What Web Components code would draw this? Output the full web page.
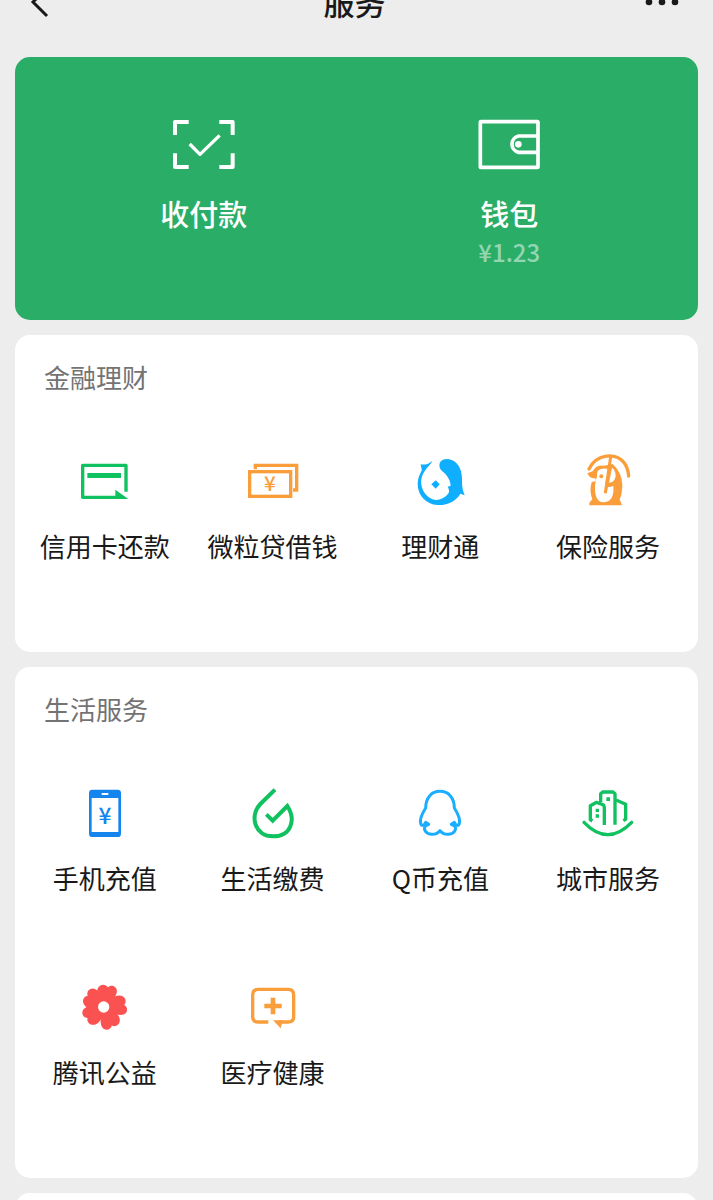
<!DOCTYPE html>
<html lang="zh-CN">
<head>
<meta charset="utf-8">
<meta name="viewport" content="width=device-width, initial-scale=1">
<title>服务</title>
<style>
  body {
    margin: 0;
    background: #ededed;
    color: #191919;
    font-family: "Noto Sans CJK SC", "Noto Sans", sans-serif;
  }
</style>
</head>
<body>
<services-page></services-page>

<script>
// name -> viewBox and markup
const ICONS = {
  scan: ['65 54 192 156', `
    <g fill="none" stroke="#fff" stroke-width="12" stroke-linejoin="round">
      <path d="M74 105V66H115M207 66H247V105M247 160V201H207M115 201H74V160"/>
      <path d="M118 132L149 163L208 106" stroke-width="10"/>
    </g>`],
  wallet: ['52 54 192 156', `
    <g fill="none" stroke="#fff" stroke-width="11" stroke-linejoin="round">
      <rect x="62" y="65" width="173" height="137" rx="2"/>
      <path d="M235 108H177a25 25 0 0 0 0 49H235"/>
    </g>
    <circle cx="176" cy="133" r="10" fill="#fff"/>`],
  card: ['57 48 156 156', `
    <path d="M198 155V76H68V172H172" fill="none" stroke="#10c160" stroke-width="10" stroke-linejoin="round"/>
    <path d="M82 99H183V114H82ZM166 149L205 177H166Z" fill="#10c160"/>`],
  loan: ['560 48 156 156', `
    <g fill="none" stroke="#fa9d3b" stroke-width="10">
      <rect x="568" y="95" width="123" height="74"/>
      <path d="M585 88V76H709V150H698"/>
    </g>
    <text x="629" y="153" font-size="62" font-weight="500" text-anchor="middle" fill="#fa9d3b">¥</text>`],
  wealth: ['43 48 156 156', `
    <path fill="#10aeff" d="M98 62C95 72 79 84 70 102C57 128 68 160 91 174C112 188 139 174 148 157C149 151 147 145 144 140L153 137C152 118 139 101 127 93C119 86 117 74 122 66C127 57 143 55 156 60C179 69 188 94 187 124C187 141 189 151 195 166L182 161C171 182 143 197 113 195C79 193 54 166 54 131C54 114 61 101 66 92C67 84 63 79 63 73C76 76 88 71 98 62Z"/>
    <path fill="#10aeff" d="M108 121L120 133L108 146L95 133Z"/>`],
  insurance: ['36 48 156 156', `
    <path d="M57 87C80 41 137 36 163 69Q174 84 176 108" fill="none" stroke="#fa9d3b" stroke-width="10" stroke-linecap="round"/>
    <path fill="#fa9d3b" d="M52 100L69 93Q79 74 102 77L128 72Q156 98 157 135Q156 165 149 178L156 196H58V188L67 178Q57 152 65 127L72 124V116Q58 115 52 100Z"/>
    <path fill="#fff" d="M81 101Q82 87 97 86Q109 84 115 89L107 124L103 158H110L113 141Q122 142 130 138Q134 184 102 187C78 188 71 158 77 122Q83 112 81 101Z"/>
    <path fill="#fff" d="M126 83Q137 91 137 108Q134 128 117 128Z"/>
    <path fill="#fff" d="M56 115H77V124H56Z"/>
    <path d="M122 50L106 160" fill="none" stroke="#fa9d3b" stroke-width="9"/>
    <circle cx="94" cy="109" r="6" fill="#fa9d3b"/>`],
  phone: ['57 39 156 156', `
    <path fill="#1485ee" fill-rule="evenodd" d="M97 44H173Q183 44 183 54V176Q183 186 173 186H97Q87 186 87 176V54Q87 44 97 44ZM95 69V171H175V69ZM125 54V60H145V54Z"/>
    <text x="135" y="147" font-size="68" font-weight="500" text-anchor="middle" fill="#1485ee">¥</text>`],
  utility: ['560 39 156 156', `
    <path d="M644 44L600 87C567 121 582 184 638 184C692 184 708 135 681 93L637 137L618 118" fill="none" stroke="#10c160" stroke-width="12"/>`],
  qcoin: ['43 39 156 156', `
    <path d="M121 49C95 49 78 69 78 99C69 113 59 130 63 145C65 154 73 152 78 142L87 148L77 153C70 163 79 177 96 178Q112 179 121 167Q130 179 146 178C163 177 172 163 165 153L155 148L164 142C169 152 177 154 179 145C183 130 173 113 164 99C164 69 147 49 121 49Z" fill="none" stroke="#1baeff" stroke-width="9" stroke-linejoin="round"/>`],
  city: ['546 39 156 156', `
    <g fill="none" stroke="#10c160" stroke-width="10" stroke-linejoin="round">
      <path d="M577 138L571 134V92L590 82L611 90L613 98V150"/>
      <path d="M602 82V56L608 51H639L645 56V149"/>
      <path d="M648 75L677 88V133L670 137"/>
      <path d="M552 142Q623 216 695 142" stroke-linecap="round"/>
    </g>
    <path fill="#10c160" d="M619 67h11v11h-11zM587 101h10v10h-10zM587 118h10v10h-10z"/>`],
  charity: ['57 36 156 156', `
    <defs><path id="petal" d="M0 0C-16 -12 -31 -32 -29 -48C-27 -66 -8 -71 1 -60C9 -72 29 -68 30 -51C31 -34 16 -12 0 0Z"/></defs>
    <g fill="#fa5151" transform="translate(133 111)">
      <use href="#petal" transform="rotate(9)"/>
      <use href="#petal" transform="rotate(83)"/>
      <use href="#petal" transform="rotate(157)"/>
      <use href="#petal" transform="rotate(236)"/>
      <use href="#petal" transform="rotate(303)"/>
      <circle r="33"/>
    </g>
    <circle cx="131" cy="111" r="17" fill="#fff"/>`],
  medical: ['560 36 156 156', `
    <path d="M624 156H594Q577 156 577 140V75Q577 58 594 58H683Q700 58 700 75V140Q700 156 683 156H655" fill="none" stroke="#fa9d3b" stroke-width="10"/>
    <path fill="#fa9d3b" d="M631 83h14v18h19v14h-19v18h-14v-18h-19v-14h19zM638 151H668L661 175Z"/>`],
  back: ['0 0 20 32', '<path d="M17 2L3 16L17 30" fill="none" stroke="#191919" stroke-width="3"/>'],
  more: ['0 0 34 8', '<g fill="#191919"><circle cx="4" cy="4" r="3.3"/><circle cx="17" cy="4" r="3.3"/><circle cx="30" cy="4" r="3.3"/></g>']
};

class SvcIcon extends HTMLElement {
  constructor() {
    super();
    this.attachShadow({ mode: 'open' });
  }

  connectedCallback() {
    const [box, shapes] = ICONS[this.getAttribute('name')];
    this.shadowRoot.innerHTML = `
      <style>
        :host { display: block; width: 52px; height: 52px; }
        svg { display: block; width: 100%; height: 100%; overflow: visible; }
      </style>
      <svg viewBox="${box}" aria-hidden="true">${shapes}</svg>
    `;
  }
}

class NavBar extends HTMLElement {
  constructor() {
    super();
    this.attachShadow({ mode: 'open' }).innerHTML = `
      <style>
        /* the bar is partly scrolled out of view */
        :host {
          display: grid;
          grid-template-columns: 1fr auto 1fr;
          align-items: center;
          height: 110px;
          margin-top: -53px;
          padding: 0 34px 0 30px;
        }
        h1 { margin: 0; font-size: 31px; line-height: 40px; font-weight: 500; }
        button { padding: 0; border: 0; background: none; cursor: pointer; }
        .back { justify-self: start; }
        .more { justify-self: end; }
        .back svc-icon { width: 20px; height: 32px; }
        .more svc-icon { width: 34px; height: 8px; }
      </style>
      <button class="back" aria-label="返回"><svc-icon name="back"></svc-icon></button>
      <h1><slot></slot></h1>
      <button class="more" aria-label="更多"><svc-icon name="more"></svc-icon></button>
    `;
  }
}

class PayCard extends HTMLElement {
  constructor() {
    super();
    this.attachShadow({ mode: 'open' }).innerHTML = `
      <style>
        :host {
          display: grid;
          grid-template-columns: 1fr 1fr;
          padding: 61px 36px 53px;
          border-radius: 15px;
          background: #2aae67;
          color: #fff;
        }
      </style>
      <slot></slot>
    `;
  }
}

class PayItem extends HTMLElement {
  constructor() {
    super();
    this.attachShadow({ mode: 'open' });
  }

  connectedCallback() {
    this.shadowRoot.innerHTML = `
      <style>
        :host { display: block; }
        a {
          display: flex;
          flex-direction: column;
          align-items: center;
          color: inherit;
          text-decoration: none;
        }
        svc-icon { width: 64px; }
        .label { margin-top: 23px; font-size: 29px; line-height: 40px; font-weight: 500; }
        .amount { margin-top: 4px; font-size: 24px; line-height: 30px; font-weight: 500; color: #94d6b3; }
      </style>
      <a href="#">
        <svc-icon name="${this.getAttribute('icon')}"></svc-icon>
        <span class="label"><slot></slot></span>
        <span class="amount"><slot name="amount"></slot></span>
      </a>
    `;
  }
}

class ServiceSection extends HTMLElement {
  constructor() {
    super();
    this.attachShadow({ mode: 'open' });
  }

  connectedCallback() {
    this.shadowRoot.innerHTML = `
      <style>
        :host {
          display: block;
          padding-bottom: 29px;
          border-radius: 15px;
          background: #fff;
        }
        h2 {
          margin: 0;
          padding: 27px 29px 37px;
          color: #737373;
          font-size: 26px;
          line-height: 30px;
          font-weight: 400;
        }
        .grid {
          display: grid;
          grid-template-columns: repeat(4, 1fr);
          padding: 0 6px;
        }
      </style>
      <h2>${this.getAttribute('heading')}</h2>
      <div class="grid"><slot></slot></div>
    `;
  }
}

class ServiceItem extends HTMLElement {
  constructor() {
    super();
    this.attachShadow({ mode: 'open' });
  }

  connectedCallback() {
    this.shadowRoot.innerHTML = `
      <style>
        :host { display: block; }
        a {
          display: flex;
          flex-direction: column;
          align-items: center;
          padding: 27px 0 59px;
          color: inherit;
          text-decoration: none;
        }
        span { margin-top: 20px; font-size: 26px; line-height: 36px; white-space: nowrap; }
      </style>
      <a href="#">
        <svc-icon name="${this.getAttribute('icon')}"></svc-icon>
        <span><slot></slot></span>
      </a>
    `;
  }
}

class ServicesPage extends HTMLElement {
  constructor() {
    super();
    this.attachShadow({ mode: 'open' }).innerHTML = `
      <style>
        :host { display: flow-root; }
        .page {
          display: flex;
          flex-direction: column;
          min-height: 100vh;
        }
        main {
          flex: 1;
          display: flex;
          flex-direction: column;
          gap: 15px;
          padding: 0 15px;
        }
        /* top edge of the next section */
        .next { flex: 1; min-height: 30px; border-radius: 15px; background: #fff; }
      </style>
      <div class="page">
        <nav-bar>服务</nav-bar>
        <main>
          <pay-card>
            <pay-item icon="scan">收付款</pay-item>
            <pay-item icon="wallet">钱包<span slot="amount">¥1.23</span></pay-item>
          </pay-card>
          <service-section heading="金融理财">
            <service-item icon="card">信用卡还款</service-item>
            <service-item icon="loan">微粒贷借钱</service-item>
            <service-item icon="wealth">理财通</service-item>
            <service-item icon="insurance">保险服务</service-item>
          </service-section>
          <service-section heading="生活服务">
            <service-item icon="phone">手机充值</service-item>
            <service-item icon="utility">生活缴费</service-item>
            <service-item icon="qcoin">Q币充值</service-item>
            <service-item icon="city">城市服务</service-item>
            <service-item icon="charity">腾讯公益</service-item>
            <service-item icon="medical">医疗健康</service-item>
          </service-section>
          <div class="next"></div>
        </main>
      </div>
    `;
  }
}

customElements.define('svc-icon', SvcIcon);
customElements.define('nav-bar', NavBar);
customElements.define('pay-card', PayCard);
customElements.define('pay-item', PayItem);
customElements.define('service-section', ServiceSection);
customElements.define('service-item', ServiceItem);
customElements.define('services-page', ServicesPage);
</script>
</body>
</html>
